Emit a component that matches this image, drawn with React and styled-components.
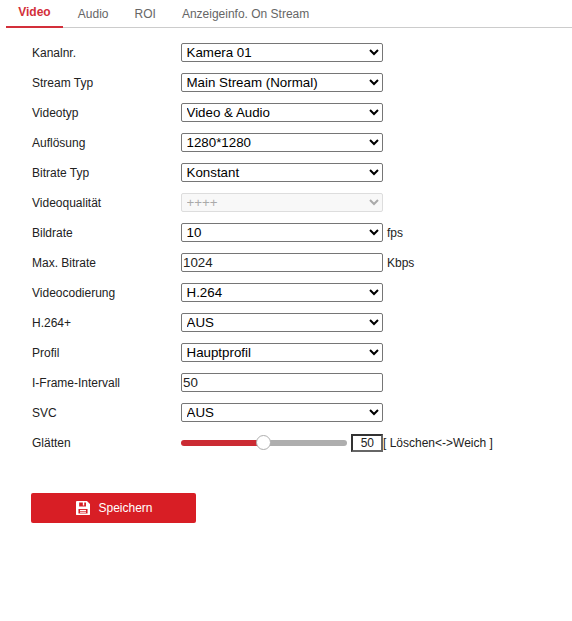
import React from 'react';
import styled, { createGlobalStyle } from 'styled-components';

const GlobalStyle = createGlobalStyle`
  html, body {
    margin: 0;
    padding: 0;
    background: #fff;
    font-family: "Liberation Sans", Arial, sans-serif;
  }
`;

const tabs = ['Video', 'Audio', 'ROI', 'Anzeigeinfo. On Stream'];

const rows = [
  { label: 'Kanalnr.', type: 'select', value: 'Kamera 01' },
  { label: 'Stream Typ', type: 'select', value: 'Main Stream (Normal)' },
  { label: 'Videotyp', type: 'select', value: 'Video & Audio' },
  { label: 'Auflösung', type: 'select', value: '1280*1280' },
  { label: 'Bitrate Typ', type: 'select', value: 'Konstant' },
  { label: 'Videoqualität', type: 'select', value: '++++', disabled: true },
  { label: 'Bildrate', type: 'select', value: '10', unit: 'fps' },
  { label: 'Max. Bitrate', type: 'input', value: '1024', unit: 'Kbps' },
  { label: 'Videocodierung', type: 'select', value: 'H.264' },
  { label: 'H.264+', type: 'select', value: 'AUS' },
  { label: 'Profil', type: 'select', value: 'Hauptprofil' },
  { label: 'I-Frame-Intervall', type: 'input', value: '50' },
  { label: 'SVC', type: 'select', value: 'AUS' },
];

export default function App() {
  return (
    <Page>
      <GlobalStyle />
      <TabBar>
        {tabs.map((t, i) => (
          <Tab key={t} active={i === 0}>{t}</Tab>
        ))}
      </TabBar>
      <Form>
        {rows.map(r => (
          <Row key={r.label}>
            <Label>{r.label}</Label>
            {r.type === 'select' ? (
              <Select defaultValue={r.value} disabled={r.disabled}>
                <option>{r.value}</option>
              </Select>
            ) : (
              <TextInput defaultValue={r.value} />
            )}
            {r.unit && <Unit>{r.unit}</Unit>}
          </Row>
        ))}
        <Row>
          <Label>Glätten</Label>
          <Slider>
            <SliderFill />
            <SliderTrack />
            <SliderThumb />
          </Slider>
          <SliderValue>50</SliderValue>
          <SliderHint>[ Löschen&lt;-&gt;Weich ]</SliderHint>
        </Row>
      </Form>
      <SaveButton>
        <svg width="14" height="14" viewBox="0 0 16 16" fill="none">
          <path fillRule="evenodd" clipRule="evenodd" fill="#fff" d="M0 1C0 0.4 0.4 0 1 0H12.5L16 3.5V15C16 15.6 15.6 16 15 16H1C0.4 16 0 15.6 0 15V1ZM3.6 1.8V6.2H11.4V1.8H9.4V5H7.8V1.8H3.6ZM2.8 9V14.2H13.2V9H2.8Z" />
          <rect x="4.6" y="10.2" width="6.8" height="1.2" fill="#fff" />
          <rect x="4.6" y="12.2" width="6.8" height="1.2" fill="#fff" />
        </svg>
        Speichern
      </SaveButton>
    </Page>
  );
}

const Page = styled.div`
  width: 572px;
  min-height: 621px;
  box-sizing: border-box;
  padding: 0 0 0 6px;
`;

const TabBar = styled.div`
  display: flex;
  height: 28px;
  box-sizing: border-box;
  border-bottom: 1px solid #ccc;
`;

const Tab = styled.div`
  height: 28px;
  box-sizing: border-box;
  padding: ${p => (p.active ? '5px 12.2px 0' : '7px 13px 0')};
  margin-right: ${p => (p.active ? '2px' : '0')};
  font-size: 12px;
  line-height: 14px;
  font-weight: ${p => (p.active ? 700 : 400)};
  color: ${p => (p.active ? '#d32f3a' : '#666')};
  border-bottom: ${p => (p.active ? '2px solid #d32f3a' : 'none')};
`;

const Form = styled.div`
  display: flex;
  flex-direction: column;
  gap: 11px;
  padding: 15px 0 0 25px;
`;

const Row = styled.div`
  display: flex;
  align-items: center;
  height: 19px;
`;

const Label = styled.div`
  width: 150px;
  flex: none;
  box-sizing: border-box;
  padding-left: 1px;
  font-size: 12px;
  color: #222;
`;

const Select = styled.select`
  width: 202px;
  height: 19px;
  box-sizing: border-box;
  padding: 0 0 0 0.5px;
  font-family: "Liberation Sans", Arial, sans-serif;
  font-size: 13.33px;
  color: #000;
  background: #fff;
  border: 1px solid #767676;
  border-radius: 2px;
  outline: none;

  &:disabled {
    color: #aaa;
    border-color: #ddd;
    background: #f8f8f8;
    opacity: 1;
  }
`;

const TextInput = styled.input`
  width: 202px;
  height: 19px;
  box-sizing: border-box;
  padding: 0 1px;
  font-family: "Liberation Sans", Arial, sans-serif;
  font-size: 13.33px;
  color: #222;
  border: 1px solid #767676;
  border-radius: 2px;
  outline: none;
`;

const Unit = styled.span`
  margin-left: 4px;
  font-size: 12px;
  color: #222;
`;

const Slider = styled.div`
  position: relative;
  display: flex;
  align-items: center;
  width: 166px;
  height: 19px;
`;

const SliderFill = styled.div`
  width: 82px;
  height: 6px;
  background: #cb2b33;
  border-radius: 3px 0 0 3px;
`;

const SliderTrack = styled.div`
  flex: 1;
  height: 6px;
  background: #aeaeae;
  border-radius: 0 3px 3px 0;
`;

const SliderThumb = styled.div`
  position: absolute;
  left: 75px;
  top: 2px;
  width: 15px;
  height: 15px;
  box-sizing: border-box;
  background: #fff;
  border: 1px solid #aeaeae;
  border-radius: 50%;
`;

const SliderValue = styled.div`
  width: 32px;
  height: 18px;
  box-sizing: border-box;
  margin-left: 4px;
  padding-right: 7px;
  text-align: right;
  font-size: 12px;
  line-height: 15px;
  color: #222;
  border: 2px solid;
  border-color: #333 #666 #666 #333;
`;

const SliderHint = styled.span`
  font-size: 12px;
  color: #222;
`;

const SaveButton = styled.button`
  display: flex;
  align-items: center;
  justify-content: center;
  gap: 8px;
  width: 165px;
  height: 30px;
  margin: 41px 0 0 25px;
  padding: 0 0 0 2px;
  font-family: "Liberation Sans", Arial, sans-serif;
  font-size: 12px;
  color: #fff;
  background: #d81e25;
  border: none;
  border-radius: 2px;
`;
